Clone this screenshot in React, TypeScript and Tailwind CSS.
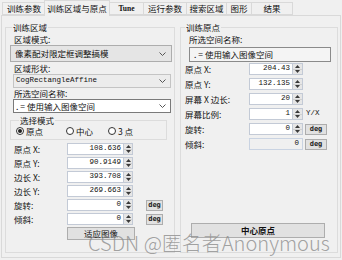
import React from "react";

const cjk = "font-['Noto_Sans_CJK_SC',sans-serif]";
const mono = "font-['Liberation_Mono','Noto_Sans_CJK_SC',monospace]";

function Spin({ cls }: { cls: string }) {
  return (
    <div className={`flex flex-col border border-l-0 border-[#c3cad6] bg-[#e6e6e6] ${cls}`}>
      <div className="flex flex-1 items-center justify-center border-b border-[#d0d0d0]">
        <svg width="5" height="3" viewBox="0 0 5 3">
          <path d="M0 3L2.5 0L5 3Z" fill="#3a3a3a" />
        </svg>
      </div>
      <div className="flex flex-1 items-center justify-center">
        <svg width="5" height="3" viewBox="0 0 5 3">
          <path d="M0 0L2.5 3L5 0Z" fill="#3a3a3a" />
        </svg>
      </div>
    </div>
  );
}

function Chevron() {
  return (
    <svg width="7" height="4" viewBox="0 0 7 4">
      <path d="M0.5 0.5L3.5 3.5L6.5 0.5" fill="none" stroke="#555" strokeWidth="1" />
    </svg>
  );
}

function Deg({ cls }: { cls: string }) {
  return (
    <div
      className={`flex h-[11px] items-center justify-center border border-[#adadad] bg-[#e1e1e1] font-['DejaVu_Sans_Mono',monospace] text-[7px] font-bold leading-none text-[#222] ${cls}`}
    >
      deg
    </div>
  );
}

function LeftRow({ label, value, deg }: { label: string; value: string; deg?: boolean }) {
  return (
    <div className="flex h-[12px] items-center">
      <div className={`w-[53px] ${cjk} text-[8.5px] leading-none text-[#111]`}>{label}</div>
      <div className={`flex h-[12px] w-[57px] items-center justify-end border border-[#c3cad6] bg-white pr-[2px] ${mono} text-[7.5px] leading-none text-[#111]`}>
        {value}
      </div>
      <Spin cls="h-[12px] w-[9px]" />
      {deg && <Deg cls="ml-[13px] w-[17px]" />}
    </div>
  );
}

function RightRow({
  label,
  value,
  extra,
  disabled,
}: {
  label: string;
  value: string;
  extra?: "deg" | "yx";
  disabled?: boolean;
}) {
  return (
    <div className="flex h-[12px] items-center">
      <div className={`w-[64px] ${cjk} text-[8.5px] leading-none text-[#111]`}>{label}</div>
      {disabled ? (
        <div className={`flex h-[12px] w-[54px] items-center justify-end border border-[#c9d3e2] bg-[#f0f0f0] pr-[3px] ${mono} text-[7.5px] leading-none text-[#111]`}>
          {value}
        </div>
      ) : (
        <>
          <div className={`flex h-[12px] w-[44px] items-center justify-end border border-[#c3cad6] bg-white pr-[2px] ${mono} text-[7.5px] leading-none text-[#111]`}>
            {value}
          </div>
          <Spin cls="h-[12px] w-[10px]" />
        </>
      )}
      {extra === "deg" && <Deg cls="ml-[2px] w-[22px]" />}
      {extra === "yx" && (
        <div className={`ml-[3px] ${mono} text-[7.5px] leading-none text-[#111]`}>Y/X</div>
      )}
    </div>
  );
}

function Radio({ label, checked }: { label: string; checked?: boolean }) {
  return (
    <div className="flex items-center gap-[2px]">
      <div className="flex h-[8px] w-[8px] items-center justify-center rounded-full border border-[#333] bg-white">
        {checked && <div className="h-[4px] w-[4px] rounded-full bg-[#222]" />}
      </div>
      <span className={`${cjk} text-[8.5px] leading-none text-[#111]`}>{label}</span>
    </div>
  );
}

const tabs: { label: string; w: string; sel?: boolean; latin?: boolean }[] = [
  { label: "训练参数", w: "w-[43px]" },
  { label: "训练区域与原点", w: "w-[66px]", sel: true },
  { label: "Tune", w: "w-[34px]", latin: true },
  { label: "运行参数", w: "w-[43px]" },
  { label: "搜索区域", w: "w-[40px]" },
  { label: "图形", w: "w-[25px]" },
  { label: "结果", w: "w-[42px]" },
];

export default function App() {
  return (
    <div className={`relative h-[260px] w-[342px] overflow-hidden bg-[#f0f0f0] ${cjk} text-[#111]`}>
      {/* tabs */}
      <div className="relative z-10 flex h-[15px] items-end pl-[2px]">
        {tabs.map((t) =>
          t.sel ? (
            <div
              key={t.label}
              className={`-mb-[1px] -mx-[1px] flex h-[16px] items-center justify-center border border-b-0 border-[#d9d9d9] bg-[#f0f0f0] ${t.w} text-[8.5px] leading-none`}
            >
              {t.label}
            </div>
          ) : (
            <div
              key={t.label}
              className={`flex h-[13px] items-center justify-center border border-r-0 border-[#d9d9d9] bg-[#f0f0f0] ${t.w} ${
                t.latin ? "font-['Liberation_Serif',serif] text-[7.5px] font-bold" : "text-[8.5px]"
              } leading-none last:border-r`}
            >
              {t.label}
            </div>
          )
        )}
      </div>

      {/* tab page */}
      <div className="mx-[1px] flex h-[243px] gap-[5px] border border-[#d9d9d9] bg-[#f0f0f0] pl-[3px] pr-[2px] pt-[5px]">
        {/* left group */}
        <fieldset className="h-[232px] w-[170px] border border-[#dcdcdc] px-[4px]">
          <legend className="ml-[2px] px-[1px] text-[8.5px] leading-[12px]">训练区域</legend>
          <div className="flex flex-col">
            <div className="pl-[4px] text-[8.5px] leading-[12px]">区域模式:</div>
            <div className="mr-[-2px] flex h-[17px] items-center justify-between border border-[#adadad] bg-[#e5e5e5] pl-[4px] pr-[5px]">
              <span className="text-[8.5px] leading-none">像素配对限定框调整搞模</span>
              <Chevron />
            </div>
            <div className="pl-[4px] text-[8.5px] leading-[12px]">区域形状:</div>
            <div className="ml-[3px] mr-[-1px] flex h-[14px] items-center justify-between border border-[#c4c4c4] bg-[#ececec] pl-[2px] pr-[4px]">
              <span className={`${mono} text-[7.5px] leading-none`}>CogRectangleAffine</span>
              <Chevron />
            </div>
            <div className="mt-[-1px] pl-[4px] text-[8.5px] leading-[12px]">所选空间名称:</div>
            <div className="ml-[3px] mr-[-1px] flex h-[14px] items-center justify-between border border-[#7a7a7a] bg-white pl-[2px] pr-[4px]">
              <span className="text-[8.5px] leading-none">. = 使用输入图像空间</span>
              <Chevron />
            </div>
            <fieldset className="mr-[3px] mt-[2px] h-[25px] border border-[#dcdcdc] px-[5px]">
              <legend className="ml-[3px] px-[1px] text-[8.5px] leading-[11px]">选择模式</legend>
              <div className="flex items-center pt-[1px]">
                <div className="w-[50px]">
                  <Radio label="原点" checked />
                </div>
                <div className="w-[42px]">
                  <Radio label="中心" />
                </div>
                <Radio label="3 点" />
              </div>
            </fieldset>
            <div className="mt-[3px] flex flex-col gap-[2px] pl-[4px]">
              <LeftRow label="原点 X:" value="108.636" />
              <LeftRow label="原点 Y:" value="90.9149" />
              <LeftRow label="边长 X:" value="393.708" />
              <LeftRow label="边长 Y:" value="269.663" />
              <LeftRow label="旋转:" value="0" deg />
              <LeftRow label="倾斜:" value="0" deg />
            </div>
            <div className="ml-[57px] mt-[2px] flex h-[13px] w-[68px] items-center justify-center border border-[#adadad] bg-[#e1e1e1] text-[8.5px] leading-none">
              适应图像
            </div>
          </div>
        </fieldset>

        {/* right group */}
        <fieldset className="h-[232px] w-[158px] border border-[#dcdcdc] px-[4px]">
          <legend className="ml-[0px] px-[1px] text-[8.5px] leading-[12px]">训练原点</legend>
          <div className="flex flex-col">
            <div className="pl-[4px] text-[8.5px] leading-[12px]">所选空间名称:</div>
            <div className="ml-[4px] mr-[2px] mt-[2px] flex h-[15px] items-center border border-[#8a8a8a] bg-[#f4f4f4] pl-[4px]">
              <span className="text-[8.5px] leading-none">. = 使用输入图像空间</span>
            </div>
            <div className="mt-[1px] flex flex-col gap-[3px]">
              <RightRow label="原点 X:" value="204.43" />
              <RightRow label="原点 Y:" value="132.135" />
              <RightRow label="屏幕 X 边长:" value="20" />
              <RightRow label="屏幕比例:" value="1" extra="yx" />
              <RightRow label="旋转:" value="0" extra="deg" />
              <RightRow label="倾斜:" value="0" extra="deg" disabled />
            </div>
            <div className="ml-[6px] mt-[73px] flex h-[15px] w-[134px] items-center justify-center border border-[#adadad] bg-[#e1e1e1] text-[8.5px] font-bold leading-none">
              中心原点
            </div>
          </div>
        </fieldset>
      </div>

      {/* watermark */}
      <div className="pointer-events-none absolute left-[88px] top-[231px] whitespace-nowrap text-[20px] font-light leading-[24px] text-[#8c8c8c]/80">
        CSDN @匿名者Anonymous
      </div>
    </div>
  );
}
